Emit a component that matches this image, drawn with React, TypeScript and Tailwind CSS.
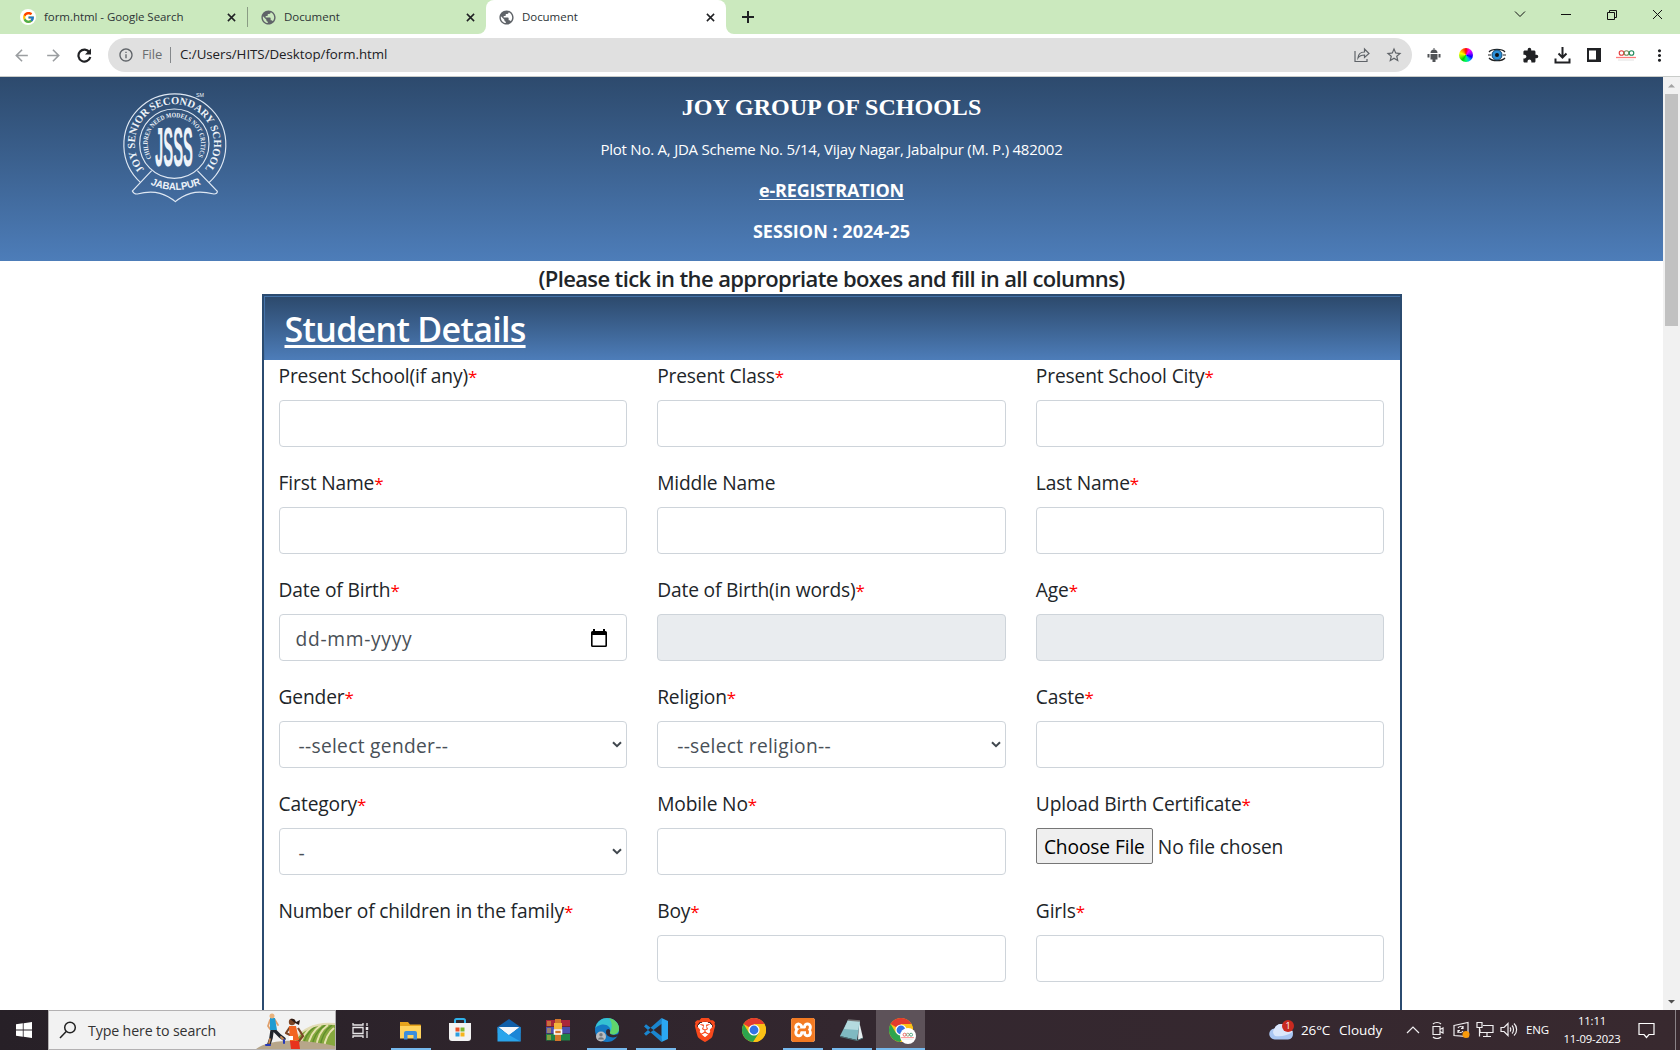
import React from 'react';
import { FcGoogle } from 'react-icons/fc';
import { SiBrave, SiXampp } from 'react-icons/si';
import {
  MdPublic,
  MdArrowBack,
  MdArrowForward,
  MdInfoOutline,
  MdStarBorder,
  MdExtension,
  MdMoreVert,
} from 'react-icons/md';

/* ---------- Browser chrome ---------- */

function CloseX() {
  return (
    <svg className="size-[9px] shrink-0" viewBox="0 0 10 10" stroke="#202124" strokeWidth="1.7">
      <path d="M1 1l8 8M9 1l-8 8" />
    </svg>
  );
}

function Tab({ icon, title }: { icon: React.ReactNode; title: string }) {
  return (
    <div className="flex h-full w-full items-center pr-[11px] pl-[12px]">
      <span className="mr-[8px] flex size-4 items-center justify-center">{icon}</span>
      <span className="grow text-[11.5px] tracking-[-0.05px] text-[#2d3436]">{title}</span>
      <CloseX />
    </div>
  );
}

function Globe() {
  return <MdPublic className="size-[17px] shrink-0 text-[#5f6368]" />;
}

function TabStrip() {
  return (
    <div className="flex h-[34px] shrink-0 bg-white">
      <div className="flex w-[486px] items-center rounded-br-[8px] bg-[#cbe9be] pl-[8px]">
        <div className="h-full w-[239px]">
          <Tab
            icon={
              <span className="flex size-4 shrink-0 items-center justify-center rounded-full bg-white">
                <FcGoogle className="size-[13px]" />
              </span>
            }
            title="form.html - Google Search"
          />
        </div>
        <div className="h-5 w-px bg-[#8a9c84]" />
        <div className="h-full w-[238px] -mr-px">
          <Tab icon={<Globe />} title="Document" />
        </div>
      </div>
      <div className="w-[240px] bg-[#cbe9be]">
        <div className="h-full rounded-t-[8px] bg-white">
          <Tab icon={<Globe />} title="Document" />
        </div>
      </div>
      <div className="flex grow items-center rounded-bl-[8px] bg-[#cbe9be] pl-[16px]">
        <svg className="size-3" viewBox="0 0 12 12" stroke="#202124" strokeWidth="2">
          <path d="M6 0v12M0 6h12" />
        </svg>
        <svg
          className="mb-[6px] ml-auto h-[12px] w-[150px]"
          viewBox="0 0 150 12"
          fill="none"
          stroke="#111"
          strokeWidth="1"
        >
          <path d="M3 3.500l5 5 5-5M49 6.500h10M95.500 4.500h7v7h-7zM97.500 4V2.500h7v7H103M141 2l9 9M150 2l-9 9" />
        </svg>
        <div className="w-[18px]" />
      </div>
    </div>
  );
}

function ColorWheel() {
  return (
    <div className="size-[14px] rounded-full bg-[conic-gradient(#f00,#f0f,#90f,#00f,#0af,#0f6,#0c0,#8e0,#ff0,#f80,#f00)]" />
  );
}

function OooLogo() {
  return (
    <svg className="h-[12px] w-[20px]" viewBox="0 0 20 12" fill="none" strokeWidth="1.100">
      <circle cx="5.500" cy="4" r="2.300" stroke="#e23b3b" />
      <circle cx="10.500" cy="4" r="2.300" stroke="#7b8b5a" />
      <circle cx="15.500" cy="4" r="2.300" stroke="#1f8a5b" />
      <path d="M0 8.500h20" stroke="#ff7a7a" strokeWidth="1.300" />
      <path d="M2 11h16" stroke="#e4e4e4" />
    </svg>
  );
}

function Toolbar() {
  return (
    <div className="flex h-[43px] shrink-0 items-center border-b border-[#c9ccc9] bg-white">
      <div className="flex w-[108px] items-center gap-[13px] pl-[12px]">
        <MdArrowBack className="size-[19px] text-[#9b9ea1]" />
        <MdArrowForward className="size-[19px] text-[#9b9ea1]" />
        <svg className="ml-px size-[15px]" viewBox="0 0 15 15" fill="none" stroke="#202124" strokeWidth="2.200">
          <path d="M12.500 4.300A6 6 0 1013.300 9" />
          <path d="M14 .5v6H8z" fill="#202124" stroke="none" />
        </svg>
      </div>
      <div className="flex h-[34px] w-[1304px] items-center rounded-full bg-[#e0e0e0] pr-[9px] pl-[10px]">
        <MdInfoOutline className="size-4 text-[#5f6368]" />
        <span className="ml-[8px] w-[28px] text-[13px] tracking-[-0.1px] text-[#6a6d70]">File</span>
        <span className="h-4 w-px bg-[#85888b]" />
        <span className="ml-[9px] grow text-[13.300px] tracking-[-0.03px] text-[#202124]">
          C:/Users/HITS/Desktop/form.html
        </span>
        <svg className="mr-[15px] size-4" viewBox="0 0 16 16" fill="none" stroke="#5f6368" strokeWidth="1.2">
          <path d="M1 4v10.500h12V12M4 11c.3-4 2.700-6 6.500-6V2l4.500 4.500-4.500 4V8C8 8 5.500 8.800 4 11z" />
        </svg>
        <MdStarBorder className="size-[18px] text-[#5f6368]" />
      </div>
      <div className="flex grow items-center pl-[15px]">
        <div className="flex w-[239px] items-center justify-between">
          <svg className="size-[14px]" viewBox="0 0 14 14" fill="#505356">
            <path d="M3.500 5a3.500 3.500 0 017 0zM3.500 6h7v5.500h-7zM.5 6h2v3.500h-2zM11.500 6h2v3.500h-2zM5.500 11.500h3V14h-3zM6.500 0h1v2h-1z" />
          </svg>
          <span className="-mr-px ml-[2px]">
            <ColorWheel />
          </span>
          <svg className="ml-px h-[14px] w-[18px]" viewBox="0 0 18 14" fill="none">
            <path d="M1 4C4 .5 14 .5 17 4M1 10c3 3.500 13 3.500 16 0" stroke="#222" strokeWidth="1.300" />
            <circle cx="9" cy="7" r="5" fill="#2b8fd8" stroke="#16486f" />
            <circle cx="9" cy="7" r="2" fill="#111" />
            <path d="M0 7h3M15 7h3" stroke="#222" />
          </svg>
          <MdExtension className="size-[17px] text-[#202124]" />
          <svg className="size-[17px]" viewBox="0 0 17 17" fill="none" stroke="#202124" strokeWidth="2">
            <path d="M8.500 0v10M4.500 6.500l4 4 4-4M1.500 11.500v4h14v-4" />
          </svg>
          <svg className="size-[14px]" viewBox="0 0 14 14">
            <path d="M0 0h14v14H0z" fill="#202124" />
            <path d="M2 2.500h7v9H2z" fill="#fff" />
          </svg>
          <OooLogo />
          <MdMoreVert className="-mr-[3px] -ml-[2px] size-[19px] text-[#202124]" />
        </div>
      </div>
    </div>
  );
}

/* ---------- Page ---------- */

function SchoolCrest() {
  return (
    <svg
      className="absolute top-[12px] left-[120px] h-[117px] w-[110px]"
      viewBox="60 39 330 351"
      fill="none"
      stroke="#dfe8f3"
      strokeWidth="3.500"
    >
      <defs>
        <path id="ring-outer" d="M133 280A118.500 118.500 0 1 1 313 280" />
        <path id="ring-inner" d="M155 246A80 80 0 1 1 291 246" />
        <path id="ribbon" d="M151 325Q226 360 306 323" />
      </defs>
      <path d="M122 320A153 153 0 1 1 327 320" />
      <circle cx="223" cy="203" r="104" />
      <path d="M155 284L97 345Q102 355 112 354Q150 344 180 352Q206 360 226 377Q246 360 272 352Q300 344 342 354Q352 354 352 346L292 284" />
      <g fill="#eef3f9" stroke="none">
        <text className="font-['Liberation_Serif'] text-[32px] font-bold">
          <textPath href="#ring-outer" textLength="538" lengthAdjust="spacingAndGlyphs">
            JOY SENIOR SECONDARY SCHOOL
          </textPath>
        </text>
        <text className="font-['Liberation_Serif'] text-[20px] font-bold">
          <textPath href="#ring-inner" textLength="334" lengthAdjust="spacingAndGlyphs">
            CHILDREN NEED MODELS NOT CRITICS
          </textPath>
        </text>
        <text
          x="165"
          y="269"
          textLength="114"
          lengthAdjust="spacingAndGlyphs"
          className="font-['Liberation_Sans'] text-[164px] font-bold"
        >
          JSSS
        </text>
        <text className="font-['Liberation_Sans'] text-[31px] font-bold">
          <textPath href="#ribbon" textLength="158" lengthAdjust="spacingAndGlyphs">
            JABALPUR
          </textPath>
        </text>
        <text x="288" y="64" className="font-['Liberation_Sans'] text-[16px]">
          SM
        </text>
      </g>
    </svg>
  );
}

function Banner() {
  return (
    <header className="relative flex h-[184px] shrink-0 flex-col items-center bg-linear-to-b from-[#2d4a6d] to-[#4d7db9] pt-[12px] text-white">
      <SchoolCrest />
      <h1 className="font-['Liberation_Serif',serif] text-2xl leading-9 font-bold tracking-[0.03px]">
        JOY GROUP OF SCHOOLS
      </h1>
      <p className="mt-[12px] text-[15px] leading-6 tracking-[-0.23px]">
        Plot No. A, JDA Scheme No. 5/14, Vijay Nagar, Jabalpur (M. P.) 482002
      </p>
      <p className="mt-[16px] text-lg leading-[27px] font-bold tracking-[-0.16px] underline decoration-1 underline-offset-2">
        e-REGISTRATION
      </p>
      <p className="mt-[14px] text-lg leading-[27px] font-bold tracking-[0.02px]">SESSION : 2024-25</p>
    </header>
  );
}

const fieldBox = 'flex h-[47px] items-center rounded-[4px] border border-[#ced4da]';

function Chevron() {
  return (
    <svg className="mb-px h-[7px] w-[10px]" viewBox="0 0 10 7" fill="none" stroke="#40474e" strokeWidth="2">
      <path d="M1 1.200l4 4 4-4" />
    </svg>
  );
}

type FieldProps = {
  label: string;
  required?: boolean;
  kind?: 'text' | 'disabled' | 'date' | 'select' | 'file' | 'none';
  value?: string;
};

function Field({ label, required = true, kind = 'text', value }: FieldProps) {
  return (
    <div className="h-[107px] px-[15px]">
      <div className="mb-[9px] h-[31px] text-[19.200px] leading-[31px] tracking-[-0.15px] whitespace-nowrap text-[#212529]">
        {label}
        {required && <span className="text-[17px] text-[#f00]">*</span>}
      </div>
      {kind === 'text' && <div className={fieldBox} />}
      {kind === 'disabled' && <div className={`${fieldBox} bg-[#e9ecef]`} />}
      {kind === 'date' && (
        <div className={`${fieldBox} justify-between pr-[19px] pl-[16px]`}>
          <span className="pt-[3px] text-[19.200px] tracking-[0.7px] text-[#495057]">{value}</span>
          <svg className="h-[18px] w-4" viewBox="0 0 16 18">
            <path d="M2 0h2v2h8V0h2v2h.5A1.500 1.500 0 0116 3.500v13a1.500 1.500 0 01-1.500 1.500h-13A1.500 1.500 0 010 16.500v-13A1.500 1.500 0 011.500 2H2zM1.600 6v10.400h12.800V6z" fillRule="evenodd" />
          </svg>
        </div>
      )}
      {kind === 'select' && (
        <div className={`${fieldBox} justify-between pr-[4px] pl-[19px]`}>
          <span className="pt-[3px] text-[19.200px] tracking-[0.300px] text-[#495057]">{value}</span>
          <Chevron />
        </div>
      )}
      {kind === 'file' && (
        <div className="flex h-[36px] items-center text-[19.200px] tracking-[-0.120px]">
          <span className="flex h-full w-[117px] items-center justify-center rounded-[2px] border border-[#767676] bg-[#efefef] pt-[2px] text-black">
            Choose File
          </span>
          <span className="ml-[5px] pt-[2px] text-[#212529]">No file chosen</span>
        </div>
      )}
    </div>
  );
}

const fields: FieldProps[] = [
  { label: 'Present School(if any)' },
  { label: 'Present Class' },
  { label: 'Present School City' },
  { label: 'First Name' },
  { label: 'Middle Name', required: false },
  { label: 'Last Name' },
  { label: 'Date of Birth', kind: 'date', value: 'dd-mm-yyyy' },
  { label: 'Date of Birth(in words)', kind: 'disabled' },
  { label: 'Age', kind: 'disabled' },
  { label: 'Gender', kind: 'select', value: '--select gender--' },
  { label: 'Religion', kind: 'select', value: '--select religion--' },
  { label: 'Caste' },
  { label: 'Category', kind: 'select', value: '-' },
  { label: 'Mobile No' },
  { label: 'Upload Birth Certificate', kind: 'file' },
  { label: 'Number of children in the family', kind: 'none' },
  { label: 'Boy' },
  { label: 'Girls' },
];

function Page() {
  return (
    <main className="flex grow flex-col overflow-hidden bg-white">
      <Banner />
      <h2 className="h-[33px] shrink-0 text-center text-[22px] leading-[35px] font-semibold tracking-[-0.620px] text-[#212529]">
        (Please tick in the appropriate boxes and fill in all columns)
      </h2>
      <section className="mx-auto h-[900px] w-[1140px] shrink-0 border-2 border-[#2b4b70]">
        <div className="h-[64px] border-t border-l border-[#4573a9] bg-linear-to-b from-[#2d4a6d] to-[#4d7db9] pl-[20px] text-[34px] leading-[65px] font-semibold tracking-[-0.700px] text-white">
          <span className="underline decoration-[3px] underline-offset-[3px]">Student Details</span>
        </div>
        <div className="grid grid-cols-3">
          {fields.map((f) => (
            <Field key={f.label} {...f} />
          ))}
        </div>
      </section>
    </main>
  );
}

function Scrollbar() {
  return (
    <div className="flex w-[17px] shrink-0 flex-col items-center bg-[#f1f1f1]">
      <svg className="size-[17px]" viewBox="0 0 17 17" fill="#a3a3a3">
        <path d="M5 10.500h7L8.500 7z" />
      </svg>
      <div className="h-[232px] w-[13px] bg-[#c1c1c1]" />
      <div className="grow" />
      <svg className="size-[17px]" viewBox="0 0 17 17" fill="#505050">
        <path d="M5 7h7l-3.500 3.500z" />
      </svg>
    </div>
  );
}

/* ---------- Taskbar ---------- */

function TaskIcon({ running, active, children }: { running?: boolean; active?: boolean; children: React.ReactNode }) {
  return (
    <div className={`flex w-[49px] flex-col items-center ${active ? 'bg-[#5d5259]' : ''}`}>
      <div className="flex h-[38px] items-center justify-center pt-[2px]">{children}</div>
      {running && <div className={`h-[2px] bg-[#76b9ed] ${active ? 'w-full' : 'w-[40px]'}`} />}
    </div>
  );
}

function Chrome() {
  return (
    <svg className="size-6" viewBox="0 0 24 24">
      <circle cx="12" cy="12" r="12" fill="#fbc116" />
      <path d="M12 12L1.600 6A12 12 0 0122.400 6H12z" fill="#e33b2e" />
      <path d="M1.600 6a12 12 0 009.400 18l6-9-5 1-5-1z" fill="#2da44e" />
      <path d="M22.400 6A12 12 0 0111.500 24L17 15l-1-9z" fill="#fbc116" />
      <circle cx="12" cy="12" r="5.600" fill="#fff" />
      <circle cx="12" cy="12" r="4.400" fill="#3373e6" />
    </svg>
  );
}

function SearchArt() {
  return (
    <svg className="ml-auto h-full w-[79px]" viewBox="0 0 79 38">
      <path d="M38 34C42 20 58 11 79 12v26H38z" fill="#86a83e" />
      <path
        d="M44 36c1-9 6-16 13-21M52 36c1-10 6-17 13-22M60 37c1-10 5-18 12-23M68 37c1-9 4-15 10-20"
        fill="none"
        stroke="#e6e2ae"
        strokeWidth="2"
      />
      <path
        d="M47 36c1-9 6-16 13-21M56 36c1-10 6-17 13-22M64 37c1-10 5-18 12-23"
        fill="none"
        stroke="#5f8f2c"
        strokeWidth="1.500"
      />
      <path d="M38 30C44 19 60 11 79 13" fill="none" stroke="#e3dcb6" strokeWidth="2" />
      <path d="M0 38C14 27 50 28 79 35v3z" fill="#b7a68a" />
      <g strokeLinecap="round" strokeLinejoin="round" fill="none">
        <path d="M16 20l-1 7-2 6M19 20l5 5 4 3" stroke="#20252c" strokeWidth="3.500" />
        <path d="M14 28l-1 4M25 26l3 3" stroke="#c98957" strokeWidth="1.800" />
        <path d="M14 9l-2 6 2 3M19 9l3 5" stroke="#e0a06c" strokeWidth="1.800" />
        <path d="M10 34h4M28 29v3" stroke="#2438b8" strokeWidth="2" />
      </g>
      <path d="M14 7h5l2 12h-7z" fill="#1f9bd1" />
      <circle cx="16" cy="5" r="2.500" fill="#e9b27c" />
      <path d="M34 16l-4 6 6 3M42 17l5 8-5 6" fill="none" stroke="#7a4526" strokeWidth="2.200" strokeLinejoin="round" />
      <path d="M33 15h7l3 14-9 2z" fill="#f26522" />
      <path d="M34 30h9l1 8h-9z" fill="#e8321c" />
      <path d="M33 25h4v4h-4z" fill="#fff" />
      <circle cx="36" cy="11" r="3.200" fill="#7a4526" />
      <path d="M34 8a5 5 0 016 3l4-2-1 5-4-2z" fill="#2b1a14" />
    </svg>
  );
}

function Taskbar() {
  return (
    <footer className="flex h-[40px] shrink-0 bg-linear-to-r from-[#272027] via-[#33272f] to-[#38292f] text-white">
      <div className="flex w-[48px] items-center justify-center">
        <svg className="size-[16px]" viewBox="0 0 16 16" fill="#fff">
          <path d="M0 2.300L6.800 1.300v6.300H0zM7.600 1.200L16 0v7.600H7.600zM0 8.400h6.800v6.300L0 13.700zM7.600 8.400H16V16l-8.400-1.200z" />
        </svg>
      </div>
      <div className="flex w-[288px] items-center border border-[#b3b1b2] bg-[#f2f2f2] pl-[10px]">
        <svg className="size-[18px] shrink-0" viewBox="0 0 18 18" fill="none" stroke="#222" strokeWidth="1.500">
          <circle cx="11" cy="6.500" r="5.300" />
          <path d="M7.200 10.400L1 17" />
        </svg>
        <span className="ml-[11px] pt-px text-[14.200px] tracking-[-0.130px] whitespace-nowrap text-[#333]">
          Type here to search
        </span>
        <SearchArt />
      </div>
      <div className="flex w-[50px] items-center justify-center pr-[2px]">
        <svg className="size-[17px]" viewBox="0 0 17 17" fill="none" stroke="#e8e6e8" strokeWidth="1.300">
          <path d="M1 1v2h10V1M1 5.500h10v6H1zM1 16v-2h10v2M15 1v3M15 9v7" />
          <path d="M15 5v3" strokeWidth="2.500" />
        </svg>
      </div>
      <TaskIcon running>
        <svg className="h-[19px] w-[21px]" viewBox="0 0 21 19">
          <path d="M0 1h8l2 2.500h10a1 1 0 011 1V17H0z" fill="#e5a31c" />
          <path d="M0 5h21v12.500H0z" fill="#ffd35e" />
          <path d="M4 18.500V12a2 2 0 012-2h9a2 2 0 012 2v6.500h-3.500V14h-6v4.500z" fill="#3b8ede" />
        </svg>
      </TaskIcon>
      <TaskIcon>
        <svg className="h-6 w-[22px]" viewBox="0 0 22 24">
          <path d="M6 6V2.500A1.500 1.500 0 017.500 1h7A1.500 1.500 0 0116 2.500V6" fill="none" stroke="#2fb1ea" strokeWidth="2" />
          <path d="M0 5h22v15a3 3 0 01-3 3H3a3 3 0 01-3-3z" fill="#f3f3f3" />
          <path d="M6.500 9.500h4v4h-4z" fill="#e8502a" />
          <path d="M11.500 9.500h4v4h-4z" fill="#7db72f" />
          <path d="M6.500 14.500h4v4h-4z" fill="#2b9ee0" />
          <path d="M11.500 14.500h4v4h-4z" fill="#f6b51b" />
        </svg>
      </TaskIcon>
      <TaskIcon>
        <svg className="h-[23px] w-6" viewBox="0 0 23 23">
          <path d="M0 8l11.500-8L23 8v6H0z" fill="#0f5ea8" />
          <path d="M2 8h19l-9.500 9z" fill="#f4f7fb" />
          <path d="M0 8l11.500 8L23 8v14.500H0z" fill="#2aa5ec" />
          <path d="M1 8.200h21L11.500 15.500z" fill="#f4f7fb" />
          <path d="M23 8v14.500L11.500 16z" fill="#1b86d6" />
        </svg>
      </TaskIcon>
      <TaskIcon>
        <svg className="h-[23px] w-6" viewBox="0 0 24 23">
          <path d="M0 1h24v6.500H0z" fill="#a9263c" />
          <path d="M0 8h24v6.500H0z" fill="#4a4fae" />
          <path d="M0 15h24v6.500H0z" fill="#1f8447" />
          <path d="M2 2v5M4 2v5M2 9v5M4 9v5M2 16v5M4 16v5" stroke="#e7b93a" strokeWidth="1" />
          <path d="M9 0h6v22H9z" fill="#d2752b" />
          <path d="M8 4h8v6H8z" fill="#f3b43c" />
          <path d="M8.500 11h7v4h-7z" fill="none" stroke="#fff" strokeWidth="1.600" />
        </svg>
      </TaskIcon>
      <TaskIcon running>
        <svg className="size-6" viewBox="0 0 24 24">
          <circle cx="12" cy="12" r="12" fill="#1479c4" />
          <path d="M.3 10C2 3 7 0 12 0c7 0 12 5 12 10.500 0 4-3 6-6.500 6-2 0-3.500-1-2.500-2.500C17 9 11 5.500 6 6.800 3 7.500 1 9 .3 10z" fill="#35c1d2" />
          <path d="M14 .2c6 1 10 5.500 10 10.300 0 4-3 6-6.500 6-2 0-3.500-1-2.500-2.500C18 9 17 4 14 .2z" fill="#61d56c" />
          <path d="M15 14c-1 3 5 4 9 1.500v1.500l-3 2c-5 1.500-10-1-10-5 0-2 1-3 2.500-3 1.500.5 2 1.500 1.500 3z" fill="#33272f" />
          <circle cx="6" cy="18.500" r="5" fill="#b9bcc0" />
          <circle cx="6" cy="16.800" r="1.700" fill="#74787c" />
          <path d="M2.800 21.500a3.300 3 0 016.400 0z" fill="#74787c" />
        </svg>
      </TaskIcon>
      <TaskIcon running>
        <svg className="size-6" viewBox="0 0 24 24">
          <path d="M17.500 24L0 8.500 2 6.200l16 12.300zM17.500 0L0 15.500 2 17.800l16-12.300z" fill="#1a86d0" />
          <path d="M17.500 0L24 3v18l-6.500 3z" fill="#2ba7f2" />
        </svg>
      </TaskIcon>
      <TaskIcon>
        <span className="flex size-6 items-center justify-center bg-[radial-gradient(circle,#fff_0_8px,transparent_8px)]">
          <SiBrave className="size-6 text-[#f8491c]" />
        </span>
      </TaskIcon>
      <TaskIcon>
        <Chrome />
      </TaskIcon>
      <TaskIcon running>
        <span className="flex size-6 items-center justify-center rounded-[3px] bg-white">
          <SiXampp className="size-6 text-[#f37a22]" />
        </span>
      </TaskIcon>
      <TaskIcon running>
        <svg className="size-[23px]" viewBox="0 0 23 23">
          <path d="M19 2l4 17-5 2z" fill="#e6eef0" />
          <path d="M8 1l12 1-3 19L0 17z" fill="#7fb9c1" />
          <path d="M8 1l12 1-2 9L4 10z" fill="#b4dade" />
          <path d="M0 17.500l17 4 6-2.500" fill="none" stroke="#4c7277" />
          <path d="M8 1l12 1" stroke="#777" strokeWidth="1.500" />
        </svg>
      </TaskIcon>
      <TaskIcon running active>
        <div className="relative">
          <Chrome />
          <span className="absolute top-[10px] left-[11px] flex size-4 items-center justify-center rounded-full bg-white [&>svg]:w-[13px]">
            <OooLogo />
          </span>
        </div>
      </TaskIcon>
      <div className="ml-auto flex items-center">
        <svg className="h-5 w-[26px]" viewBox="0 0 26 20">
          <path d="M6 19.500a5.500 5.500 0 01-.5-11A7.500 7.500 0 0119 8a5.800 5.800 0 010 11.500z" fill="#a9c6f2" />
          <path d="M6 16a5 5 0 01-.5-7.500A7.500 7.500 0 0119 8c2 0 4 2 4.500 4-6 4-12 5-17.500 4z" fill="#dbe7fb" />
          <circle cx="19" cy="6" r="6" fill="#c92a20" />
          <text x="16.500" y="9.300" fill="#fff" className="font-['Open_Sans'] text-[9px]">
            1
          </text>
        </svg>
        <span className="ml-[6px] w-[38px] text-[13.500px] tracking-[-0.150px] whitespace-nowrap">26°C</span>
        <span className="w-[67px] text-[13.500px]">Cloudy</span>
        <svg className="h-[18px] w-[112px]" viewBox="0 0 112 18" fill="none" stroke="#f1eff1" strokeWidth="1.200">
          <path d="M1 12l6-6 6 6" />
          <path d="M27 5.500h7v8h-7zM34 8.500l3-1.500v5l-3-1.500M27 3c2-2 6-2 8 0M27 16c2 2 6 2 8 0" />
          <path d="M48 4.500l14-3v14l-14-1zM52 7c1-2 4-2 5 0M57 5v2.500h-2M57 10c-1 2-4 2-5 0M52 12V9.500h2" />
          <circle cx="60" cy="13.500" r="3.500" fill="#f99b0c" stroke="none" />
          <path d="M77 4.500h10v7h-13v-3M81 11.500v4M77 15.500h8M71 1.500h5v5h-5zM73.500 6.500v9" />
          <path d="M95 6.500h3l4-4v12l-4-4h-3zM104 6.500c1 1 1 3 0 4M106 4.500c2 2 2 6 0 8M108 2.500c3.500 3 3.500 9 0 12" />
        </svg>
        <span className="ml-[8px] w-[36px] text-[11.500px] tracking-[-0.1px]">ENG</span>
        <div className="flex w-[60px] flex-col items-center text-[11.300px] leading-[18px] tracking-[-0.200px]">
          <span>11:11</span>
          <span>11-09-2023</span>
        </div>
        <svg className="ml-[16px] size-[17px]" viewBox="0 0 17 17" fill="none" stroke="#fff" strokeWidth="1.200">
          <path d="M1 1.500h15v11h-5l-2.500 3-2.500-3H1z" />
        </svg>
        <div className="mr-[4px] ml-[20px] h-[40px] w-px bg-[#8a8287]" />
      </div>
    </footer>
  );
}

export default function App() {
  return (
    <div className="flex h-[1050px] w-[1680px] flex-col overflow-hidden bg-white font-['Open_Sans',sans-serif]">
      <TabStrip />
      <Toolbar />
      <div className="flex min-h-0 grow">
        <Page />
        <Scrollbar />
      </div>
      <Taskbar />
    </div>
  );
}
